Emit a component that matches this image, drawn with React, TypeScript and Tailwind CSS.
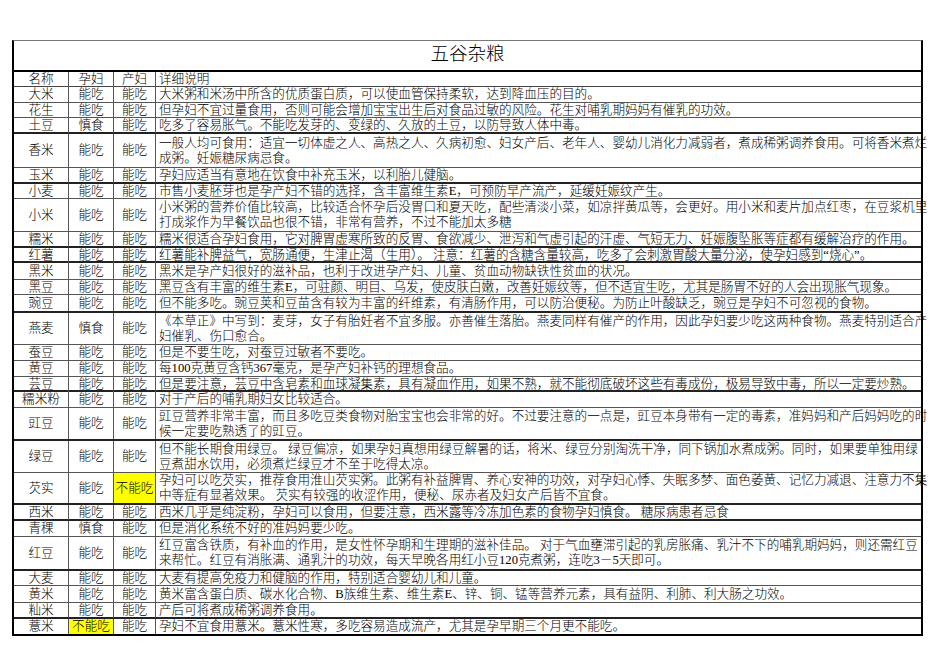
type Row = {
    name: string
    p: string
    c: string
    lines: string[]
    h: number
    thick?: boolean
}

const rows: Row[] = [
    { name: '大米', p: '能吃', c: '能吃', h: 16, lines: ['大米粥和米汤中所含的优质蛋白质，可以使血管保持柔软，达到降血压的目的。'] },
    { name: '花生', p: '能吃', c: '能吃', h: 15, lines: ['但孕妇不宜过量食用，否则可能会增加宝宝出生后对食品过敏的风险。花生对哺乳期妈妈有催乳的功效。'] },
    { name: '土豆', p: '慎食', c: '能吃', h: 16, thick: true, lines: ['吃多了容易胀气。不能吃发芽的、变绿的、久放的土豆，以防导致人体中毒。'] },
    {
        name: '香米', p: '能吃', c: '能吃', h: 34,
        lines: [
            '一般人均可食用：适宜一切体虚之人、高热之人、久病初愈、妇女产后、老年人、婴幼儿消化力减弱者，煮成稀粥调养食用。可将香米煮烂',
            '成粥。妊娠糖尿病忌食。',
        ],
    },
    { name: '玉米', p: '能吃', c: '能吃', h: 16, thick: true, lines: ['孕妇应适当有意地在饮食中补充玉米，以利胎儿健脑。'] },
    { name: '小麦', p: '能吃', c: '能吃', h: 15, lines: ['市售小麦胚芽也是孕产妇不错的选择，含丰富维生素E，可预防早产流产，延缓妊娠纹产生。'] },
    {
        name: '小米', p: '能吃', c: '能吃', h: 33,
        lines: [
            '小米粥的营养价值比较高，比较适合怀孕后没胃口和夏天吃，配些清淡小菜，如凉拌黄瓜等，会更好。用小米和麦片加点红枣，在豆浆机里',
            '打成浆作为早餐饮品也很不错，非常有营养，不过不能加太多糖',
        ],
    },
    { name: '糯米', p: '能吃', c: '能吃', h: 16, thick: true, lines: ['糯米很适合孕妇食用，它对脾胃虚寒所致的反胃、食欲减少、泄泻和气虚引起的汗虚、气短无力、妊娠腹坠胀等症都有缓解治疗的作用。'] },
    { name: '红薯', p: '能吃', c: '能吃', h: 15, thick: true, lines: ['红薯能补脾益气，宽肠通便，生津止渴（生用）。 注意：红薯的含糖含量较高，吃多了会刺激胃酸大量分泌，使孕妇感到“烧心”。'] },
    { name: '黑米', p: '能吃', c: '能吃', h: 17, lines: ['黑米是孕产妇很好的滋补品，也利于改进孕产妇、儿童、贫血动物缺铁性贫血的状况。'] },
    { name: '黑豆', p: '能吃', c: '能吃', h: 15, lines: ['黑豆含有丰富的维生素E，可驻颜、明目、乌发，使皮肤白嫩，改善妊娠纹等，但不适宜生吃，尤其是肠胃不好的人会出现胀气现象。'] },
    { name: '豌豆', p: '能吃', c: '能吃', h: 18, thick: true, lines: ['但不能多吃。豌豆荚和豆苗含有较为丰富的纤维素，有清肠作用，可以防治便秘。为防止叶酸缺乏，豌豆是孕妇不可忽视的食物。'] },
    {
        name: '燕麦', p: '慎食', c: '能吃', h: 32,
        lines: [
            '《本草正》中写到：麦芽，女子有胎妊者不宜多服。亦善催生落胎。燕麦同样有催产的作用，因此孕妇要少吃这两种食物。燕麦特别适合产',
            '妇催乳、伤口愈合。',
        ],
    },
    { name: '蚕豆', p: '能吃', c: '能吃', h: 16, lines: ['但是不要生吃，对蚕豆过敏者不要吃。'] },
    { name: '黄豆', p: '能吃', c: '能吃', h: 16, lines: ['每100克黄豆含钙367毫克，是孕产妇补钙的理想食品。'] },
    { name: '芸豆', p: '能吃', c: '能吃', h: 15, thick: true, lines: ['但是要注意，芸豆中含皂素和血球凝集素，具有凝血作用，如果不熟，就不能彻底破坏这些有毒成份，极易导致中毒，所以一定要炒熟。'] },
    { name: '糯米粉', p: '能吃', c: '能吃', h: 16, lines: ['对于产后的哺乳期妇女比较适合。'] },
    {
        name: '豇豆', p: '能吃', c: '能吃', h: 33, thick: true,
        lines: [
            '豇豆营养非常丰富，而且多吃豆类食物对胎宝宝也会非常的好。不过要注意的一点是，豇豆本身带有一定的毒素，准妈妈和产后妈妈吃的时',
            '候一定要吃熟透了的豇豆。',
        ],
    },
    {
        name: '绿豆', p: '能吃', c: '能吃', h: 32,
        lines: [
            '但不能长期食用绿豆。 绿豆偏凉，如果孕妇真想用绿豆解暑的话，将米、绿豆分别淘洗干净，同下锅加水煮成粥。同时，如果要单独用绿',
            '豆煮甜水饮用，必须煮烂绿豆才不至于吃得太凉。',
        ],
    },
    {
        name: '芡实', p: '能吃', c: '不能吃', h: 32, thick: true,
        lines: [
            '孕妇可以吃芡实，推荐食用淮山芡实粥。此粥有补益脾胃、养心安神的功效，对孕妇心悸、失眠多梦、面色萎黄、记忆力减退、注意力不集',
            '中等症有显著效果。 芡实有较强的收涩作用，便秘、尿赤者及妇女产后皆不宜食。',
        ],
    },
    { name: '西米', p: '能吃', c: '能吃', h: 16, thick: true, lines: ['西米几乎是纯淀粉，孕妇可以食用，但要注意，西米露等冷冻加色素的食物孕妇慎食。 糖尿病患者忌食'] },
    { name: '青稞', p: '慎食', c: '能吃', h: 16, lines: ['但是消化系统不好的准妈妈要少吃。'] },
    {
        name: '红豆', p: '能吃', c: '能吃', h: 34, thick: true,
        lines: [
            '红豆富含铁质，有补血的作用，是女性怀孕期和生理期的滋补佳品。 对于气血壅滞引起的乳房胀痛、乳汁不下的哺乳期妈妈，则还需红豆',
            '来帮忙。红豆有消胀满、通乳汁的功效，每天早晚各用红小豆120克煮粥，连吃3－5天即可。',
        ],
    },
    { name: '大麦', p: '能吃', c: '能吃', h: 15, lines: ['大麦有提高免疫力和健脑的作用，特别适合婴幼儿和儿童。'] },
    { name: '黄米', p: '能吃', c: '能吃', h: 17, lines: ['黄米富含蛋白质、碳水化合物、B族维生素、维生素E、锌、铜、锰等营养元素，具有益阴、利肺、利大肠之功效。'] },
    { name: '籼米', p: '能吃', c: '能吃', h: 16, thick: true, lines: ['产后可将煮成稀粥调养食用。'] },
    { name: '薏米', p: '不能吃', c: '能吃', h: 17, lines: ['孕妇不宜食用薏米。薏米性寒，多吃容易造成流产，尤其是孕早期三个月更不能吃。'] },
]

function Mark({ v }: { v: string }) {
    return (
        <div
            className={
                'flex h-full items-center justify-center border-r border-[#555] ' +
                (v === '不能吃' ? 'bg-[#ffff00]' : '')
            }
        >
            {v}
        </div>
    )
}

export default function App() {
    return (
        <div
            className="min-h-[672px] w-[950px] bg-white pl-[12px] pt-[40px] text-[12.6px] font-light text-black"
            style={{ fontFamily: '"Liberation Serif", "Noto Sans CJK SC", serif' }}
        >
            <div className="w-[911px] border-x-2 border-t border-x-black border-t-[#777]">
                <div className="flex h-[31px] items-start justify-center border-b-2 border-black text-[18.5px] font-light leading-[26px]">
                    五谷杂粮
                </div>
                <div className="grid h-[15px] grid-cols-[55px_45px_42px_1fr] border-b border-[#444] leading-[15px]">
                    <div className="border-r border-[#555] text-center">名称</div>
                    <div className="border-r border-[#555] text-center">孕妇</div>
                    <div className="border-r border-[#555] text-center">产妇</div>
                    <div className="pl-[3px]">详细说明</div>
                </div>
                {rows.map((r, i) => (
                    <div
                        key={i}
                        className={
                            'grid grid-cols-[55px_45px_42px_1fr] leading-[15px] ' +
                            (i === rows.length - 1
                                ? 'border-b-2 border-black'
                                : r.thick
                                  ? 'border-b-2 border-[#222]'
                                  : 'border-b border-[#555]')
                        }
                        style={{ height: r.h }}
                    >
                        <div className="flex h-full items-center justify-center border-r border-[#555]">
                            {r.name}
                        </div>
                        <Mark v={r.p} />
                        <Mark v={r.c} />
                        <div className="flex h-full flex-col justify-center whitespace-nowrap pl-[3px]">
                            {r.lines.map((l, j) => (
                                <div key={j}>{l}</div>
                            ))}
                        </div>
                    </div>
                ))}
            </div>
        </div>
    )
}
